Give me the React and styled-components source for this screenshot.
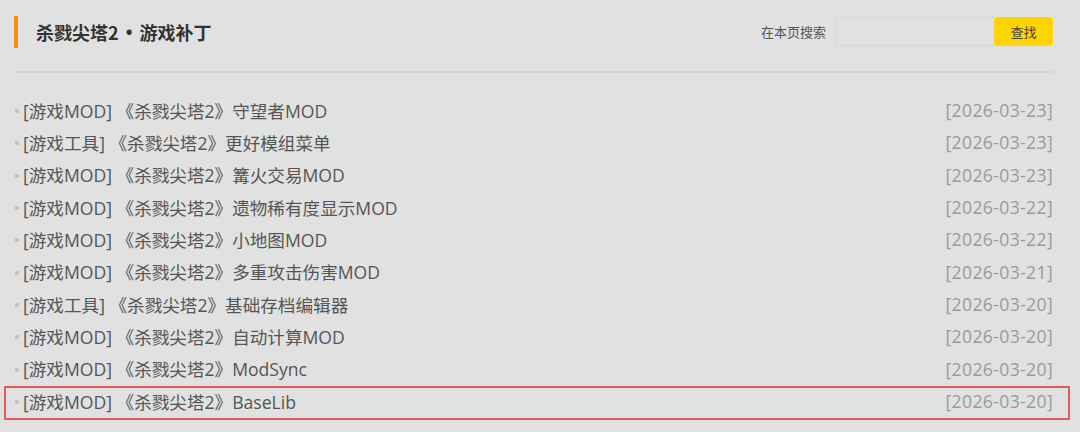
import React from "react";
import styled, { createGlobalStyle } from "styled-components";

const GlobalStyle = createGlobalStyle`
  html, body {
    margin: 0;
    padding: 0;
    background: #e1e1e1;
  }
  body {
    font-family: "Open Sans", "Noto Sans CJK SC", sans-serif;
    color: #555;
  }
`;

const Page = styled.div`
  width: 1080px;
  height: 432px;
  overflow: hidden;
  padding: 17px 27px 0 14px;
  box-sizing: border-box;
`;

const Header = styled.div`
  display: flex;
  align-items: center;
  justify-content: space-between;
  height: 30px;
`;

const Title = styled.h1`
  margin: 0;
  display: flex;
  align-items: center;
  height: 32px;
  border-left: 4px solid #ff8a00;
  padding-left: 18px;
  font-family: "Noto Sans CJK SC", sans-serif;
  font-size: 18px;
  font-weight: 700;
  color: #333;
`;

const Dot = styled.span`
  font-family: "Open Sans", sans-serif;
  margin: 0 7px;
`;

const Search = styled.div`
  display: flex;
  align-items: center;
  height: 29px;
  margin-top: -2px;
`;

const SearchLabel = styled.span`
  font-family: "Noto Sans CJK SC", sans-serif;
  font-size: 13px;
  color: #555;
  margin-right: 9px;
`;

const SearchInput = styled.input`
  width: 159px;
  height: 29px;
  box-sizing: border-box;
  border: 1px solid #d7d7d7;
  border-right: none;
  background: #e1e1e1;
  outline: none;
  padding: 0 6px;
`;

const SearchButton = styled.button`
  width: 59px;
  height: 29px;
  border: none;
  border-radius: 4px;
  background: #ffd400;
  font-family: "Noto Sans CJK SC", sans-serif;
  font-size: 13px;
  color: #444;
  cursor: pointer;
`;

const Divider = styled.hr`
  margin: 24px 0 0 2px;
  border: none;
  height: 2px;
  background: #d5d5d5;
`;

const List = styled.ul`
  list-style: none;
  margin: 21px 0 0;
  padding: 0 0 0 1px;
`;

const Row = styled.li`
  position: relative;
  display: flex;
  justify-content: space-between;
  align-items: center;
  height: 32.33px;
  font-size: 17.6px;

  &::before {
    content: "";
    position: absolute;
    left: 0;
    top: 15px;
    width: 4px;
    height: 4px;
    background: #c4c4c4;
  }

  ${(p) =>
    p.$marked &&
    `
    &::after {
      content: "";
      position: absolute;
      left: -11px;
      right: -17px;
      top: 1px;
      bottom: -3px;
      border: 2px solid #e35a5a;
      border-radius: 1px;
    }
  `}
`;

const ItemTitle = styled.a`
  padding-left: 8px;
  color: #555;
  text-decoration: none;
  font-family: "Open Sans", "Noto Sans CJK SC", sans-serif;
`;

const ItemDate = styled.span`
  color: #9a9a9a;
  font-family: "Open Sans", sans-serif;
  letter-spacing: 0.35px;
`;

const items = [
  ["[游戏MOD] 《杀戮尖塔2》守望者MOD", "2026-03-23"],
  ["[游戏工具] 《杀戮尖塔2》更好模组菜单", "2026-03-23"],
  ["[游戏MOD] 《杀戮尖塔2》篝火交易MOD", "2026-03-23"],
  ["[游戏MOD] 《杀戮尖塔2》遗物稀有度显示MOD", "2026-03-22"],
  ["[游戏MOD] 《杀戮尖塔2》小地图MOD", "2026-03-22"],
  ["[游戏MOD] 《杀戮尖塔2》多重攻击伤害MOD", "2026-03-21"],
  ["[游戏工具] 《杀戮尖塔2》基础存档编辑器", "2026-03-20"],
  ["[游戏MOD] 《杀戮尖塔2》自动计算MOD", "2026-03-20"],
  ["[游戏MOD] 《杀戮尖塔2》ModSync", "2026-03-20"],
  ["[游戏MOD] 《杀戮尖塔2》BaseLib", "2026-03-20"],
];

const App = () => {
  return (
    <Page>
      <GlobalStyle />
      <Header>
        <Title>
          杀戮尖塔2<Dot>•</Dot>游戏补丁
        </Title>
        <Search>
          <SearchLabel>在本页搜索</SearchLabel>
          <SearchInput type="text" />
          <SearchButton>查找</SearchButton>
        </Search>
      </Header>
      <Divider />
      <List>
        {items.map(([title, date], i) => (
          <Row key={i} $marked={i === items.length - 1}>
            <ItemTitle href="#">{title}</ItemTitle>
            <ItemDate>[{date}]</ItemDate>
          </Row>
        ))}
      </List>
    </Page>
  );
};

export default App;
